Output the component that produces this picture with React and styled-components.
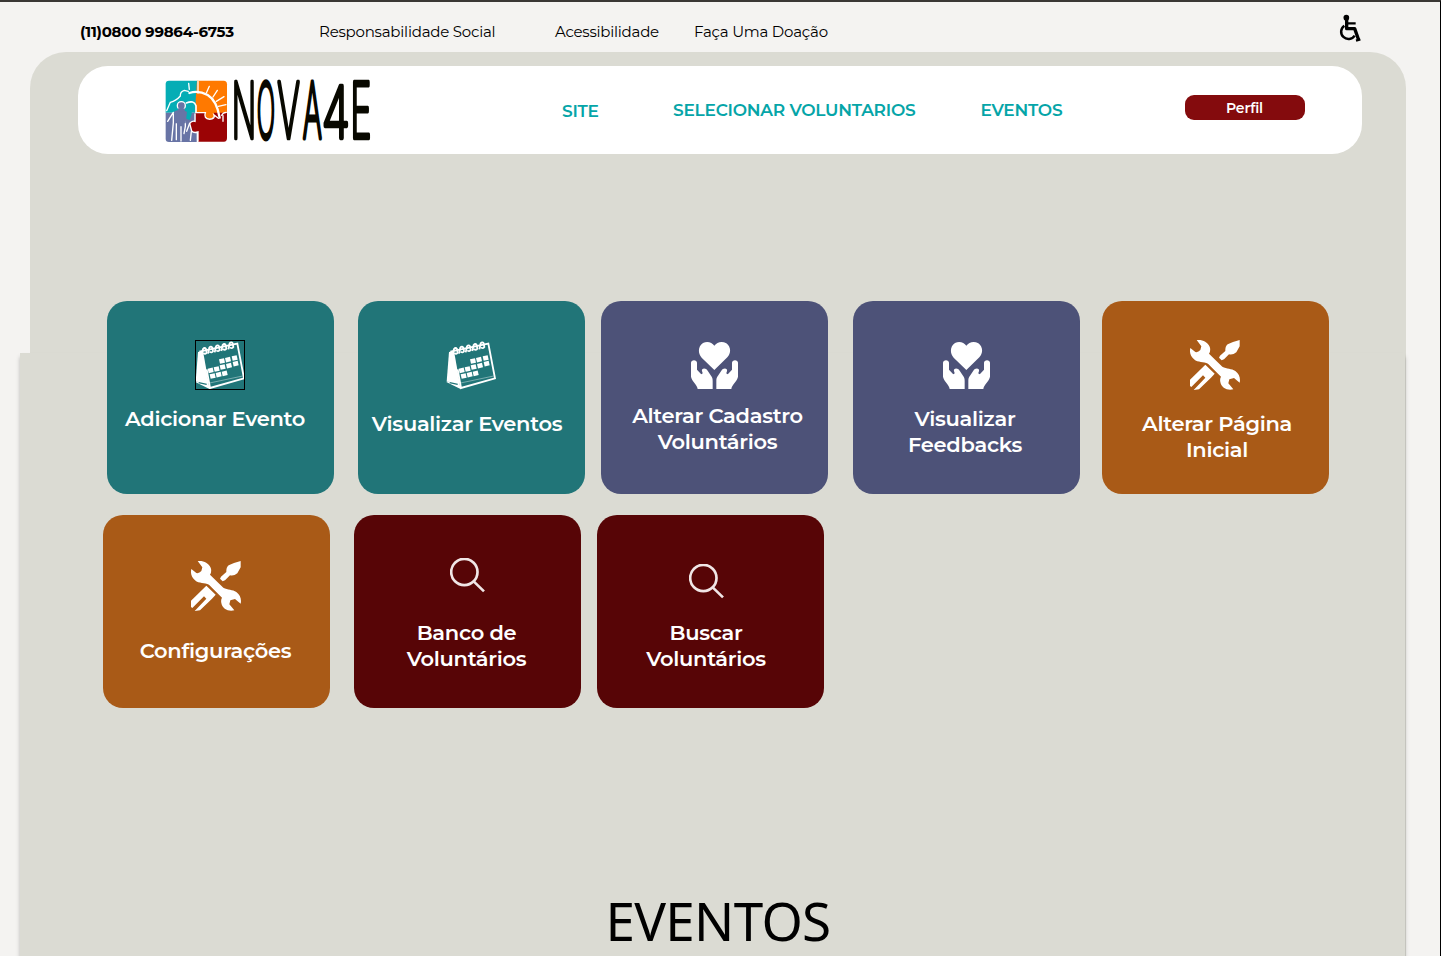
import React from "react";
import styled, { createGlobalStyle } from "styled-components";

const GlobalStyle = createGlobalStyle`
  *, *::before, *::after { box-sizing: border-box; }
  html, body { margin: 0; padding: 0; }
  body {
    background: #f4f3f1;
    font-family: Montserrat, Inter, "Liberation Sans", sans-serif;
    color: #000;
    overflow: hidden;
  }
`;

const Page = styled.div`
  width: 1441px;
  height: 956px;
  overflow: hidden;
  border-top: 2px solid #3a3735;
  border-right: 1px solid #000;
  background: #f4f3f1;
`;

const TopBar = styled.div`
  display: flex;
  align-items: flex-start;
  height: 50px;
  padding: 20px 0 0 80px;
  font-size: 15px;
  line-height: 20px;
  white-space: nowrap;
`;

const Phone = styled.strong`
  width: 239px;
  font-weight: 700;
  letter-spacing: ${(p) => p.$track}px;
`;

const TopLink = styled.a`
  width: ${(p) => p.$width}px;
  letter-spacing: ${(p) => p.$track}px;
`;

const AccessButton = styled.span`
  display: block;
  margin: -8px 0 0 426px;
  height: 28px;
`;

const Panel = styled.main`
  position: relative;
  z-index: 0;
  width: 1376px;
  height: 904px;
  margin-left: 30px;
  padding: 14px 0 0 48px;
  border-radius: 36px 36px 0 0;
  background: #dbdbd3;

  &::before {
    content: "";
    position: absolute;
    z-index: -1;
    top: 301px;
    left: -10px;
    width: 1385px;
    bottom: 0;
    background: #dbdbd3;
    box-shadow: 0 4px 4px rgba(0, 0, 0, 0.25);
  }
`;

const Header = styled.header`
  display: flex;
  align-items: flex-start;
  width: 1284px;
  height: 88px;
  padding-left: 87px;
  border-radius: 30px;
  background: #fff;
`;

const LogoBox = styled.div`
  width: 397px;
  padding-top: 14px;
  svg { display: block; overflow: visible; }
`;

const NavLink = styled.a`
  width: ${(p) => p.$width}px;
  padding-top: ${(p) => p.$top}px;
  color: #05a5a8;
  font-size: 17px;
  font-weight: 600;
  line-height: 20px;
  letter-spacing: ${(p) => p.$track}px;
  white-space: nowrap;
`;

const ProfileButton = styled.button`
  width: 120px;
  height: 25px;
  margin-top: 29px;
  padding: 1px 1px 0 0;
  border: 0;
  border-radius: 9px;
  background: #840b0d;
  color: #fff;
  font: 600 14px/24px Montserrat, Inter, sans-serif;
  letter-spacing: -0.15px;
`;

const CardRow = styled.div`
  display: flex;
  margin-top: ${(p) => p.$top}px;
  margin-left: ${(p) => p.$left}px;
`;

const Card = styled.article`
  display: flex;
  flex-direction: column;
  align-items: center;
  flex: none;
  width: 227px;
  height: 193px;
  margin-left: ${(p) => p.$gap || 0}px;
  padding-top: ${(p) => p.$pad}px;
  border-radius: 20px;
  background: ${(p) => p.$color};
  svg { display: block; flex: none; }
`;

const IconFrame = styled.span`
  display: block;
  width: ${(p) => p.$size || 50}px;
  height: ${(p) => p.$size || 50}px;
  outline: ${(p) => (p.$framed ? "1px solid #000" : "none")};
  outline-offset: -1px;
  margin-left: ${(p) => p.$shift || 0}px;
`;

const CardLabel = styled.h3`
  margin: ${(p) => p.$top}px 0 0 ${(p) => p.$shift || 0}px;
  color: #fff;
  font-size: 21px;
  font-weight: 600;
  line-height: 26px;
  letter-spacing: -0.3px;
  text-align: center;
  white-space: pre-line;
`;

const Title = styled.h1`
  width: 1280px;
  margin: 177px 0 0 0;
  font-family: "Noto Sans", "Open Sans", sans-serif;
  font-size: 53px;
  font-weight: 400;
  line-height: 72px;
  letter-spacing: -0.7px;
  text-align: center;
`;

const cells = [
  [126, 93], [144, 89], [164, 84],
  [92, 121], [110, 117], [128, 111], [147, 107], [167, 101],
  [98, 138], [116, 134], [134, 130],
];
const rings = [[73, 61], [92, 57], [112, 53], [132, 49], [153, 44]];

const Calendar = () => (
  <svg width="50" height="50" viewBox="45 30 150 150" fill="none" stroke="#fff">
    <path d="M54 66 69 63 86 158 47 155Z" fill="#fff" stroke="none" />
    <path d="M46 156 84 156 90 178Z" fill="#fff" stroke="none" />
    <path d="M56 158 80 163" stroke="#217578" strokeWidth="3.5" />
    <path d="M58 65 172 41 192 145 90 174 80 118" strokeWidth="5.5" />
    <path d="M84 160 188 138" strokeWidth="2" opacity=".6" />
    {rings.map(([x, y]) => (
      <g key={x} transform={`translate(${x} ${y})`}>
        <path d="M-8 14 -4 -4Q1 -10 5 -4L7 7Q3 13 -3 8" strokeWidth="5.5" />
      </g>
    ))}
    {cells.map(([x, y]) => (
      <path key={`${x}-${y}`} transform={`translate(${x} ${y})`} d="M-9 -5 6 -8.500 9 5 -6 8.500Z" fill="#fff" stroke="none" />
    ))}
  </svg>
);

const HeartHands = () => (
  <svg width="50" height="50" viewBox="45 33 150 150" fill="#fff">
    <path d="M118 120 80 83C67 69 70 48 84 39C97 32 111 37 118 47C126 36 141 32 154 40C168 50 169 69 157 82Z" />
    <path d="M48 98C48 88 66 88 66 98V119L78 132C83 134 84 129 81 124C78 114 93 113 98 122L107 136C112 142 113 146 113 153V177H68C67 164 50 153 48 140Z" />
    <path d="M189 98C189 88 171 88 171 98V119L159 132C154 134 153 129 156 124C159 114 144 113 139 122L130 136C125 142 124 146 124 153V177H169C170 164 187 153 189 140Z" />
  </svg>
);

const Tools = () => (
  <svg width="50" height="50" viewBox="45 30 150 150" fill="#fff">
    <path d="M65 30C83 27 101 39 105 53Q107 64 102 71L142 110C155 117 170 115 181 123C193 132 197 145 194 158L177 144L163 148L160 160L175 178C157 183 139 173 136 156Q134 146 138 140L99 101C86 94 69 99 57 88C46 78 43 66 46 54L61 66Q69 68 76 60L79 49Z" />
    <path d="M194 30V49L184 67Q173 76 162 73L147 88L140 91L132 83L135 77L151 63Q150 50 158 43Q172 35 194 30Z" />
    <path d="M91 104 119 131 108 143 72 178 56 180 91 143 84 136 49 171 45 168V149Z" />
  </svg>
);

const Search = () => (
  <svg width="35" height="35" viewBox="59 40 105 105" fill="none" stroke="#f0e6e6" strokeWidth="8">
    <circle cx="102" cy="82" r="39.500" />
    <path d="M130 110 161 140" />
  </svg>
);

const Wheelchair = () => (
  <svg width="24" height="28" viewBox="57 42 72 84" fill="none" stroke="#000">
    <circle cx="82" cy="53" r="8.500" fill="#000" stroke="none" />
    <path d="M83 58V86H107L119 120" strokeWidth="10" strokeLinejoin="round" />
    <path d="M83 70H110M111 122 124 118" strokeWidth="7" />
    <path d="M76 77A22 22 0 1 0 107 107" strokeWidth="7.500" />
  </svg>
);

const wordmark = [
  { glyph: "N", x: 230, scale: 0.416 },
  { glyph: "O", x: 305, scale: 0.317 },
  { glyph: "V", x: 367, scale: 0.45 },
  { glyph: "A", x: 443, scale: 0.38 },
  { glyph: "4", x: 500, scale: 0.6, rise: 0.93 },
  { glyph: "E", x: 586, scale: 0.47 },
];

const Logo = () => (
  <svg width="210" height="68" viewBox="30 30 630 204">
    <path d="M42 32H127V128H32V42Q32 32 42 32Z" fill="#05adb5" />
    <path d="M126 32H206Q216 32 216 43V130H122V90Z" fill="#ff7900" />
    <path d="M32 128H125V216H42Q32 216 32 207Z" fill="#6874a5" />
    <path d="M35 124 56 101 75 99 110 119V133L104 150 90 145 87 128Z" fill="#05adb5" />
    <path d="M122 128H151Q145 145 164 147Q181 145 176 128H216V204Q216 215 207 215H129V187Q112 191 109 178L104 158Q112 152 122 154Z" fill="#9b0305" />
    <path d="M151 126Q145 144 164 146Q181 144 176 126Z" fill="#ff7900" />
    <g fill="none" stroke="#fff" strokeWidth="4" strokeLinecap="round">
      <path d="M129 34V69M154 69 163 49M174 81 187 61M184 94 207 80M190 109 213 104" />
      <path d="M101 40 103 58M100 64 88 61Q75 65 76 78 64 92 46 97L35 122" />
      <path d="M103 69Q130 60 158 75Q185 91 194 143" strokeWidth="7" />
      <path d="M94 99Q117 89 123 107V126" strokeWidth="5" />
      <path d="M55 127 38 154M55 131V158L50 211M64 160V209M78 170V213M91 145V169L87 191M104 160 95 184M109 185 106 211" strokeWidth="4" />
      <path d="M120 132V154Q111 151 104 160L110 183Q116 190 129 186V214" strokeWidth="4" />
      <path d="M122 128H151Q145 146 164 148Q181 146 177 135L190 145" strokeWidth="4" />
      <path d="M200 136Q204 127 214 127M204 137V154" />
    </g>
    <path d="M58 124Q79 114 96 126L92 160H59Z" fill="#6874a5" />
    <circle cx="79" cy="107" r="12" fill="#6874a5" stroke="#fff" strokeWidth="4" />
    <path d="M69 115H89V124H69Z" fill="#6874a5" />
    {wordmark.map(({ glyph, x, scale, rise = 1 }) => (
      <text
        key={glyph}
        transform={`translate(${x} 203) scale(${scale} ${rise})`}
        fontFamily="Inter, sans-serif"
        fontSize="230"
        fontWeight="200"
        fill="#080800"
        stroke="#080800"
        strokeWidth="3.6"
        strokeLinejoin="round"
        vectorEffect="non-scaling-stroke"
      >
        {glyph}
      </text>
    ))}
  </svg>
);

const TEAL = "#217578";
const INDIGO = "#4d5278";
const ORANGE = "#a95a17";
const WINE = "#570506";

export default function App() {
  return (
    <>
      <GlobalStyle />
      <Page>
        <TopBar>
          <Phone $track={-0.25}>(11)0800 99864-6753</Phone>
          <TopLink $width={236} $track={-0.22}>Responsabilidade Social</TopLink>
          <TopLink $width={139} $track={-0.24}>Acessibilidade</TopLink>
          <TopLink $width={218} $track={-0.22}>Faça Uma Doação</TopLink>
          <AccessButton><Wheelchair /></AccessButton>
        </TopBar>
        <Panel>
          <Header>
            <LogoBox><Logo /></LogoBox>
            <NavLink $width={111} $top={35} $track={-0.25}>SITE</NavLink>
            <NavLink $width={307.5} $top={34} $track={-0.25}>SELECIONAR VOLUNTARIOS</NavLink>
            <NavLink $width={204.5} $top={34} $track={-0.25}>EVENTOS</NavLink>
            <ProfileButton>Perfil</ProfileButton>
          </Header>

          <CardRow $top={147} $left={29}>
            <Card $color={TEAL} $pad={39}>
              <IconFrame $framed $shift={-1}><Calendar /></IconFrame>
              <CardLabel $top={16} $shift={-11}>Adicionar Evento</CardLabel>
            </Card>
            <Card $color={TEAL} $pad={39} $gap={24}>
              <IconFrame $shift={-2}><Calendar /></IconFrame>
              <CardLabel $top={21} $shift={-9}>Visualizar Eventos</CardLabel>
            </Card>
            <Card $color={INDIGO} $pad={40} $gap={16}>
              <IconFrame><HeartHands /></IconFrame>
              <CardLabel $top={12} $shift={6}>{"Alterar Cadastro\nVoluntários"}</CardLabel>
            </Card>
            <Card $color={INDIGO} $pad={40} $gap={25}>
              <IconFrame><HeartHands /></IconFrame>
              <CardLabel $top={15} $shift={-3}>{"Visualizar\nFeedbacks"}</CardLabel>
            </Card>
            <Card $color={ORANGE} $pad={39} $gap={22}>
              <IconFrame $shift={-1}><Tools /></IconFrame>
              <CardLabel $top={21} $shift={3}>{"Alterar Página\nInicial"}</CardLabel>
            </Card>
          </CardRow>

          <CardRow $top={21} $left={25}>
            <Card $color={ORANGE} $pad={46}>
              <IconFrame $shift={-2}><Tools /></IconFrame>
              <CardLabel $top={27} $shift={-2}>Configurações</CardLabel>
            </Card>
            <Card $color={WINE} $pad={43} $gap={24}>
              <IconFrame $size={35}><Search /></IconFrame>
              <CardLabel $top={27} $shift={-2}>{"Banco de\nVoluntários"}</CardLabel>
            </Card>
            <Card $color={WINE} $pad={49} $gap={16}>
              <IconFrame $size={35} $shift={-8}><Search /></IconFrame>
              <CardLabel $top={21} $shift={-9}>{"Buscar\nVoluntários"}</CardLabel>
            </Card>
          </CardRow>

          <Title>EVENTOS</Title>
        </Panel>
      </Page>
    </>
  );
}
